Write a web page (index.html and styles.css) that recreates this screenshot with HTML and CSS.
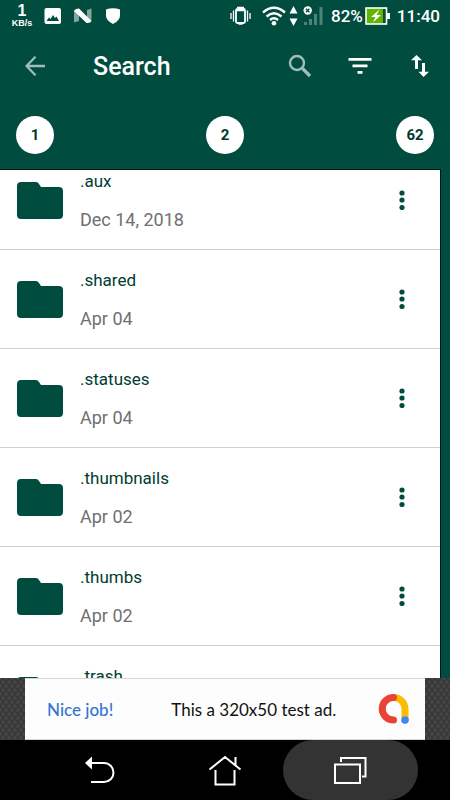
FILE: index.html
```html
<!DOCTYPE html>
<html lang="en">
<head>
    <meta charset="utf-8">
    <meta name="viewport" content="width=device-width, initial-scale=1">
    <title>Search</title>
    <link rel="stylesheet" href="styles.css">
</head>
<body>
    <!-- shared shapes -->
    <svg class="sprite" aria-hidden="true">
        <symbol id="folder" viewBox="0 0 46 37">
            <path d="M4 0h15q2 0 3 2l2 3h18q4 0 4 4v24q0 4-4 4H4q-4 0-4-4V4q0-4 4-4z"/>
        </symbol>
        <symbol id="dots" viewBox="0 0 6 20">
            <circle cx="3" cy="3" r="2.6"/>
            <circle cx="3" cy="10" r="2.6"/>
            <circle cx="3" cy="17.5" r="2.6"/>
        </symbol>
    </svg>

    <div class="status-bar">
        <div class="speed"><b>1</b><span>KB/s</span></div>
        <svg class="picture-icon" width="18" height="18" viewBox="0 0 18 18">
            <rect x="0.5" y="1" width="16.5" height="16" rx="2" fill="#fff"/>
            <path d="M2.5 14l2.500-3.500 1.500 1.500 2.500-4 2 3 1.500-1.500 2.500 4.500z" fill="#004d40"/>
        </svg>
        <svg class="n-icon" width="20" height="18" viewBox="0 0 20 18">
            <path d="M1 4l5-2v12l-5 1.500zM14 3l4.500-1.500v12L14 15z" fill="#80a69f"/>
            <path d="M1 4q1-2.500 5-2.500L18.500 14q-1 2.500-5 2z" fill="#fff"/>
        </svg>
        <svg class="shield-icon" width="16" height="18" viewBox="0 0 16 18">
            <path d="M1 2.500q7-2.500 14 0v6q0 5-7 8.500-7-3.500-7-8.500z" fill="#fff"/>
        </svg>
        <div class="status-right">
            <svg width="21" height="20" viewBox="0 0 21 20" fill="none" stroke="#fff">
                <rect x="6" y="3" width="9" height="14" rx="1.500" stroke-width="1.800"/>
                <path d="M7 1.500h7M6 4.500h9M8.500 18h4" stroke-width="1.400"/>
                <path d="M3.500 4.500v11M17.500 4.500v11M1 7v6M20 7v6" stroke-width="1.300"/>
            </svg>
            <svg class="wifi-icon" width="24" height="20" viewBox="0 0 24 20" fill="none" stroke="#fff" stroke-width="2.400">
                <path d="M1 6.500q11-9.500 22 0M4.500 10.500q7.500-6.500 15 0M8 14q4-3.500 8 0"/>
                <circle cx="12" cy="17.200" r="2.300" fill="#fff" stroke="none"/>
            </svg>
            <svg class="updown-icon" width="9" height="20" viewBox="0 0 9 20" fill="#fff">
                <path d="M4.500 0L8.500 7.500h-8zM4.500 20l4-7.500h-8z"/>
            </svg>
            <svg class="signal-icon" width="21" height="20" viewBox="0 0 21 20">
                <path d="M1 16h3v3H1zM6 13h3v6H6zM11 8h3v11h-3zM16.500 1h3v18h-3z" fill="#4d8279"/>
                <circle cx="4.700" cy="4.500" r="4.200" fill="#fff"/>
                <path d="M3 2.800l3.400 3.400M6.400 2.800L3 6.200" stroke="#004d40" stroke-width="1.400"/>
            </svg>
            <span>82%</span>
            <svg class="battery-icon" width="25" height="18" viewBox="0 0 25 18">
                <rect x="1" y="1" width="20.500" height="16" fill="#5fb404" stroke="#fff" stroke-width="1.600"/>
                <path d="M18 2h2.500v14H18z" fill="#004d40"/>
                <path d="M22 6h3v6h-3z" fill="#fff"/>
                <path d="M14.500 2.500L6 10h4.500L8 15.500 16 8h-4.500z" fill="#fff"/>
            </svg>
            <span>11:40</span>
        </div>
    </div>

    <header class="toolbar">
        <button class="icon-button" aria-label="Back">
            <svg width="20" height="20" viewBox="0 0 20 20" fill="none" stroke="#a0bdb8" stroke-width="2.300">
                <path d="M20 10H1.500M10.500 .8L1.500 10l9 9.200"/>
            </svg>
        </button>
        <h1>Search</h1>
        <button class="icon-button" aria-label="Search">
            <svg width="24" height="24" viewBox="0 0 24 24" fill="none" stroke="#a0bdb8" stroke-width="2.400">
                <circle cx="9" cy="9" r="7"/>
                <path d="M14.500 14.500l7.500 7.500" stroke-width="3.200"/>
            </svg>
        </button>
        <button class="icon-button" aria-label="Filter">
            <svg width="24" height="16" viewBox="0 0 24 16" fill="#fff">
                <path d="M.5 0h23v2.800H.5zM4.500 6.500h15v2.800h-15zM9.500 13h5v2.800h-5z"/>
            </svg>
        </button>
        <button class="icon-button" aria-label="Sort">
            <svg width="18" height="24" viewBox="0 0 18 24" fill="#fff">
                <path d="M5.500 1L11 6.300H7V15H4V6.300H0zM12.500 23L7.500 17.700H11V9h3v8.700h4z"/>
            </svg>
        </button>
    </header>

    <div class="counters">
        <span>1</span>
        <span>2</span>
        <span>62</span>
    </div>

    <main class="list-area">
        <ul class="file-list">
            <li>
                <svg class="folder"><use href="#folder"/></svg>
                <div class="info"><p class="name">.aux</p><p class="date">Dec 14, 2018</p></div>
                <button class="more" aria-label="More options"><svg><use href="#dots"/></svg></button>
            </li>
            <li>
                <svg class="folder"><use href="#folder"/></svg>
                <div class="info"><p class="name">.shared</p><p class="date">Apr 04</p></div>
                <button class="more" aria-label="More options"><svg><use href="#dots"/></svg></button>
            </li>
            <li>
                <svg class="folder"><use href="#folder"/></svg>
                <div class="info"><p class="name">.statuses</p><p class="date">Apr 04</p></div>
                <button class="more" aria-label="More options"><svg><use href="#dots"/></svg></button>
            </li>
            <li>
                <svg class="folder"><use href="#folder"/></svg>
                <div class="info"><p class="name">.thumbnails</p><p class="date">Apr 02</p></div>
                <button class="more" aria-label="More options"><svg><use href="#dots"/></svg></button>
            </li>
            <li>
                <svg class="folder"><use href="#folder"/></svg>
                <div class="info"><p class="name">.thumbs</p><p class="date">Apr 02</p></div>
                <button class="more" aria-label="More options"><svg><use href="#dots"/></svg></button>
            </li>
            <li>
                <svg class="folder"><use href="#folder"/></svg>
                <div class="info"><p class="name">.trash</p></div>
            </li>
        </ul>
    </main>

    <div class="ad-strip">
        <div class="ad">
            <span class="ad-title">Nice job!</span>
            <span class="ad-text">This a 320x50 test ad.</span>
            <svg width="32" height="32" viewBox="0 0 32 32" fill="none" stroke-width="7" stroke-linecap="round">
                <path d="M15.500 4.500A11.500 11.500 0 0 1 27 16v11" stroke="#fbbc04"/>
                <path d="M15.500 4.500a11.250 11.250 0 0 0 0 22.500" stroke="#ea4335"/>
                <circle cx="27" cy="27" r="3.800" fill="#4285f4" stroke="none"/>
            </svg>
        </div>
    </div>

    <nav class="nav-bar">
        <button aria-label="Back">
            <svg width="32" height="30" viewBox="0 0 32 30" fill="none" stroke="#fff" stroke-width="2">
                <path d="M7 8h13a9.500 9.500 0 0 1 0 19H7"/>
                <path d="M1 8l7-6.500v13z" fill="#fff" stroke="none"/>
            </svg>
        </button>
        <button aria-label="Home">
            <svg width="34" height="32" viewBox="0 0 34 32" fill="none" stroke="#fff" stroke-width="2">
                <path d="M1.500 15.500L17 3l15.500 12.500M27.500 3v8M7.500 16v14.500h19V16"/>
            </svg>
        </button>
        <button class="active" aria-label="Recent apps">
            <svg width="34" height="28" viewBox="0 0 34 28" fill="none" stroke="#fff" stroke-width="2">
                <path d="M2 8.500h25V27H2zM8 6V2h24.500v18.500H29"/>
            </svg>
        </button>
    </nav>
</body>
</html>
```

FILE: styles.css
```css
* {
    box-sizing: border-box;
}
body {
    margin: 0;
    height: 100vh;
    display: flex;
    flex-direction: column;
    overflow: hidden;
    background: #004d40;
    color: #fff;
    font-family: Roboto, sans-serif;
}
button {
    padding: 0;
    border: 0;
    background: none;
    display: flex;
    align-items: center;
    justify-content: center;
}
h1, p, ul {
    margin: 0;
    padding: 0;
}
svg {
    display: block;
    flex: none;
}
.sprite {
    display: none;
}

/* status bar */
.status-bar {
    flex: none;
    display: flex;
    align-items: center;
    height: 31px;
    padding: 0 10px 0 11px;
    font-size: 17px;
    font-weight: 500;
}
.speed {
    display: flex;
    flex-direction: column;
    align-items: center;
    width: 22px;
    font-family: "Liberation Sans", sans-serif;
    font-size: 9px;
    font-weight: bold;
    line-height: 10px;
}
.speed b {
    font-size: 16px;
    line-height: 14px;
}
.picture-icon {
    margin-left: 11px;
}
.n-icon {
    margin-left: 11px;
}
.shield-icon {
    margin-left: 12px;
}
.status-right {
    display: flex;
    align-items: center;
    margin-left: auto;
}
.wifi-icon {
    margin-left: 11px;
}
.updown-icon {
    margin-left: 3px;
}
.signal-icon {
    margin: 0 7px 0 5px;
}
.battery-icon {
    margin: 0 7px 0 2px;
}

/* toolbar */
.toolbar {
    flex: none;
    display: flex;
    align-items: center;
    height: 69px;
    padding-left: 5px;
}
.toolbar h1 {
    flex: 1;
    padding: 2px 0 0 28px;
    font-size: 25px;
    font-weight: 500;
    line-height: 30px;
}
.icon-button {
    width: 60px;
    height: 60px;
}

.counters {
    flex: none;
    display: flex;
    align-items: center;
    justify-content: space-between;
    height: 69px;
    padding: 0 16px;
}
.counters span {
    width: 38px;
    border-radius: 50%;
    background: #fff;
    color: #00382e;
    font-size: 15px;
    font-weight: bold;
    line-height: 38px;
    text-align: center;
}

/* file list, scrolled a little way down */
.list-area {
    flex: 1;
    min-height: 0;
    margin-right: 9px;
    overflow: hidden;
    background: #fff;
    border: solid #001a14;
    border-width: 1px 1px 0 0;
}
.file-list {
    margin-top: -19px;
    list-style: none;
}
.file-list li {
    display: flex;
    align-items: center;
    height: 99px;
    padding: 0 8px 0 17px;
    border-bottom: 1px solid #d0d0d0;
}
.folder {
    width: 46px;
    height: 37px;
    fill: #004d40;
}
.info {
    flex: 1;
    height: 62px;
    padding-left: 17px;
    font-size: 18px;
    line-height: 24px;
}
.name {
    margin-bottom: 15px;
    color: #003d32;
    font-size: 17px;
}
.date {
    color: #707070;
}
.more {
    width: 60px;
    height: 60px;
}
.more svg {
    width: 6px;
    height: 20px;
    fill: #004d40;
}

/* ad banner */
.ad-strip {
    flex: none;
    padding: 0 25px;
    background:
        radial-gradient(circle, #464646 1px, transparent 3px) 0 0 / 6px 8px,
        radial-gradient(circle, #464646 1px, transparent 3px) 3px 4px / 6px 8px,
        #333;
}
.ad {
    display: flex;
    align-items: center;
    height: 62px;
    padding: 0 15px 0 22px;
    background: #fdfdfd;
    border: solid #d5d8d8;
    border-width: 1px 0;
    color: #111;
    font-family: Lato, sans-serif;
    font-size: 17px;
}
.ad-title {
    color: #3574d4;
    font-weight: 500;
}
.ad-text {
    flex: 1;
    padding-left: 58px;
}

/* system buttons */
.nav-bar {
    flex: none;
    display: flex;
    justify-content: center;
    height: 60px;
    background: #000;
}
.nav-bar button {
    flex: 0 1 125px;
}
.nav-bar .active {
    flex-basis: 135px;
    margin: 0 -5px;
    border-radius: 30px;
    background: #333;
}
```
